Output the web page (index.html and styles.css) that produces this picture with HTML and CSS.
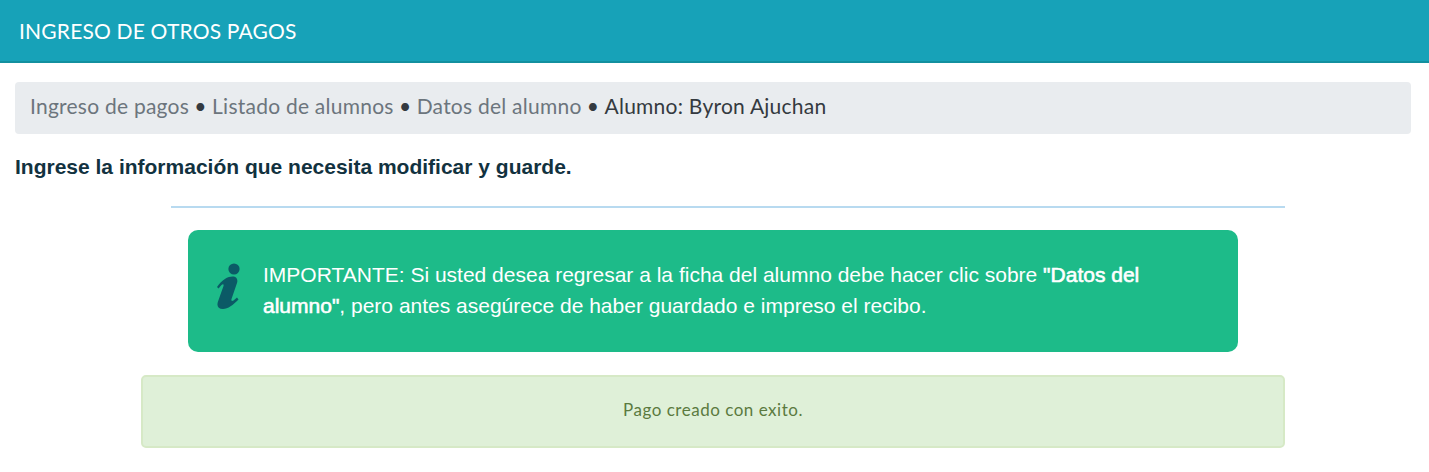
FILE: index.html
```html
<!DOCTYPE html>
<html lang="es">
<head>
<meta charset="utf-8">
<title>Ingreso de otros pagos</title>
<link rel="stylesheet" href="styles.css">
</head>
<body>
<header class="topbar"><h1 class="topbar-title">INGRESO DE OTROS PAGOS</h1></header>
<main class="content">
  <nav class="crumbs">
    <a href="#">Ingreso de pagos</a><span class="sep">•</span><a href="#">Listado de alumnos</a><span class="sep">•</span><a href="#">Datos del alumno</a><span class="sep">•</span><span class="current">Alumno: Byron Ajuchan</span>
  </nav>
  <p class="lead">Ingrese la información que necesita modificar y guarde.</p>
  <hr class="rule">
  <section class="notice">
    <svg class="notice-icon" viewBox="0 0 24 46" aria-hidden="true"><circle cx="17" cy="6" r="5.600"/><path d="M0 24C5 16.500 11 13.500 15.500 13.500C20 13.500 21 17 20 20L14.500 36C14 38 15 38.500 16.500 37.500L20 34.500L21.500 36.500C16 42 11 46 6 46C1 46 -0.500 43 1 38.500L6.500 23C7 21 6 20.500 4.500 22L1.500 25.500Z"/></svg>
    <p class="notice-text">IMPORTANTE: Si usted desea regresar a la ficha del alumno debe hacer clic sobre <strong class="fake-bold">"Datos del alumno"</strong>, pero antes asegúrece de haber guardado e impreso el recibo.</p>
  </section>
  <div class="success">Pago creado con exito.</div>
</main>
</body>
</html>
```
FILE: styles.css
```css
* { box-sizing: border-box; }
body { margin: 0; background: #fff; font-family: "Liberation Sans", Arial, sans-serif; }
.topbar { height: 63px; background: #17a2b8; border-bottom: 2px solid #13909f; padding: 0 19px; display: flex; align-items: center; }
.topbar-title { margin: 0; font: 400 21px/1.2 Lato, sans-serif; letter-spacing: .18px; color: #fff; }
.content { padding: 19px 18px 0 15px; }
.crumbs { height: 52px; background: #e9ecef; border-radius: 4px; padding: 0 15px 4px; display: flex; align-items: center; font: 400 21px/1.5 Lato, sans-serif; letter-spacing: .24px; color: #343a40; }
.crumbs a { color: #6c757d; text-decoration: none; }
.sep { margin: 0 5.300px; }
.lead { margin: 21px 0 0; font-size: 21px; line-height: 24px; font-weight: 700; color: #12323f; }
.rule { margin: 27px 126px 0 156px; border: 0; height: 2px; background: #b8daf0; }
.notice { margin: 22px 173px 0 173px; height: 122px; background: #1dbb89; border-radius: 10px; display: flex; align-items: center; padding: 0 72px 0 28px; color: #fff; }
.notice-icon { width: 24px; height: 46px; flex: none; fill: #0b5a66; margin: 0 23px 11px 1px; }
.notice-text { margin: 0 0 2px -1px; font-size: 21px; line-height: 31px; }
.fake-bold { font-weight: 400; -webkit-text-stroke: .6px #fff; }
.success { margin: 23px 126px 0 126px; height: 73px; padding-bottom: 4px; background: #dff0d8; border: 2px solid #d6e9c6; border-radius: 5px; display: flex; align-items: center; justify-content: center; font: 400 17px/1.5 Lato, sans-serif; letter-spacing: .52px; color: #5b7a3f; }
```
